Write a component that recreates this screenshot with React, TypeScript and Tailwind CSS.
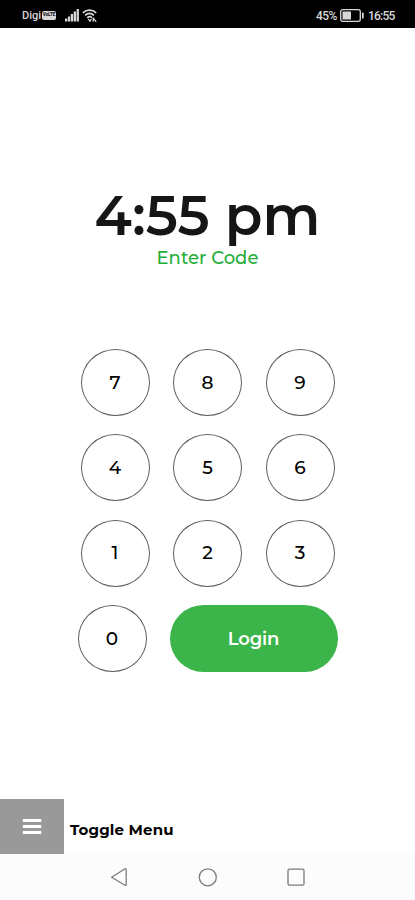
import React from 'react';

const KEY_ROWS = [
    ['7', '8', '9'],
    ['4', '5', '6'],
    ['1', '2', '3']
];

const KeyButton: React.FC<{ label: string }> = ({ label }) => (
    <button className="flex h-[67px] w-[69px] items-center justify-center rounded-[50%] border border-[#5c5c5c] text-[18.5px] font-medium text-black">
        {label}
    </button>
);

const StatusBar: React.FC = () => (
    <header className="flex h-7 shrink-0 items-center justify-between bg-black pt-[3px] pr-[20px] pl-[22px] font-['Roboto',sans-serif] text-[#d8d8d8]">
        <div className="flex items-center">
            <span className="w-[20px] text-[11px] leading-none font-medium">Digi</span>
            <span className="flex h-[9px] w-[14px] items-center justify-center rounded-[2px] bg-[#d8d8d8] text-[4.5px] leading-none font-bold text-black">
                VoLTE
            </span>
            <svg className="ml-[9px]" width="14" height="13" viewBox="0 0 14 13" fill="currentColor">
                <rect x="0" y="9.5" width="2.3" height="3" />
                <rect x="2.9" y="7.5" width="2.3" height="5" />
                <rect x="5.8" y="5" width="2.3" height="7.5" />
                <rect x="8.7" y="2.5" width="2.3" height="10" />
                <rect x="11.6" y="0" width="2.3" height="12.5" />
            </svg>
            <svg className="ml-[3px]" width="16" height="14" viewBox="0 0 16 14" fill="none" stroke="currentColor" strokeWidth="1.7">
                <path d="M.8 3.8C4.8.2 10.2.2 14.2 3.8" />
                <path d="M3 6.4c2.8-2.4 6.2-2.4 9 0" />
                <path d="M5.2 8.8c1.5-1.3 3.4-1.3 4.8 0" />
                <path d="M6.2 9.8 8 12.2l1.4-2M11 8.6l3.2 4.2M11.2 12.8v-3.6" strokeWidth="1.2" />
            </svg>
        </div>
        <div className="flex items-center">
            <span className="w-[23px] text-[12px] leading-none font-medium tracking-[-0.6px]">45%</span>
            <svg className="ml-px" width="24" height="13" viewBox="0 0 24 13" fill="none">
                <rect x="0.7" y="0.7" width="19.6" height="11.6" rx="2" stroke="currentColor" strokeWidth="1.3" />
                <rect x="2.5" y="2.5" width="8.5" height="8" fill="currentColor" />
                <rect x="22" y="3.5" width="1.7" height="6" rx="0.6" fill="currentColor" />
            </svg>
            <span className="ml-[4px] w-[27px] text-[12px] leading-none font-medium tracking-[-0.8px]">16:55</span>
        </div>
    </header>
);

const Keypad: React.FC = () => (
    <div className="mt-[79px] flex flex-col items-center gap-[18.3px]">
        {KEY_ROWS.map((row) => (
            <div key={row[0]} className="flex gap-[23.5px]">
                {row.map((label) => (
                    <KeyButton key={label} label={label} />
                ))}
            </div>
        ))}
        <div className="flex gap-[23px]">
            <KeyButton label="0" />
            <button className="flex h-[67px] w-[168px] items-center justify-center rounded-full bg-[#3bb54a] pt-[2px] text-[18px] font-semibold tracking-[-0.2px] text-white">
                Login
            </button>
        </div>
    </div>
);

const NavigationBar: React.FC = () => (
    <nav className="flex h-[46px] shrink-0 items-center justify-center gap-[70px] bg-[#fcfcfc] text-[#7b7b7b]">
        <svg width="18" height="20" viewBox="0 0 18 20" fill="none" stroke="currentColor" strokeWidth="1.3" strokeLinejoin="round">
            <path d="M1.6 10.2 14.6 2q1.6-.8 1.6 1v14q0 1.8-1.6 1L1.6 10.2Z" />
        </svg>
        <svg width="19" height="20" viewBox="0 0 19 20" fill="none" stroke="currentColor" strokeWidth="1.3">
            <circle cx="9.8" cy="10.3" r="8.5" />
        </svg>
        <svg width="18" height="20" viewBox="0 0 18 20" fill="none" stroke="currentColor" strokeWidth="1.3">
            <rect x="1" y="2.2" width="16" height="16" rx="1.5" />
        </svg>
    </nav>
);

const App: React.FC = () => {
    return (
        <div className="flex h-[900px] w-[415px] flex-col overflow-hidden bg-white font-['Montserrat','Inter',sans-serif]">
            <StatusBar />

            <main className="flex flex-1 flex-col items-center pt-[159px]">
                <h1 className="h-[59px] text-[55px] leading-[58px] font-semibold whitespace-nowrap text-[#161616]">4:55 pm</h1>
                <p className="h-[24px] text-[18px] leading-[24px] font-medium whitespace-nowrap text-[#25ae38]">Enter Code</p>
                <Keypad />
            </main>

            <div className="flex h-[55px] shrink-0 items-center">
                <button className="flex h-full w-16 items-center justify-center bg-[#999999]">
                    <svg width="20" height="18" viewBox="0 0 20 18" fill="white">
                        <rect x="0.8" y="1" width="18.5" height="3" rx="0.6" />
                        <rect x="0.8" y="7" width="18.5" height="3" rx="0.6" />
                        <rect x="0.8" y="13" width="18.5" height="3" rx="0.6" />
                    </svg>
                </button>
                <span className="ml-[6px] pt-[7px] text-[15px] leading-5 font-bold tracking-[0.15px] text-black">Toggle Menu</span>
            </div>
            <NavigationBar />
        </div>
    );
};

export default App;
